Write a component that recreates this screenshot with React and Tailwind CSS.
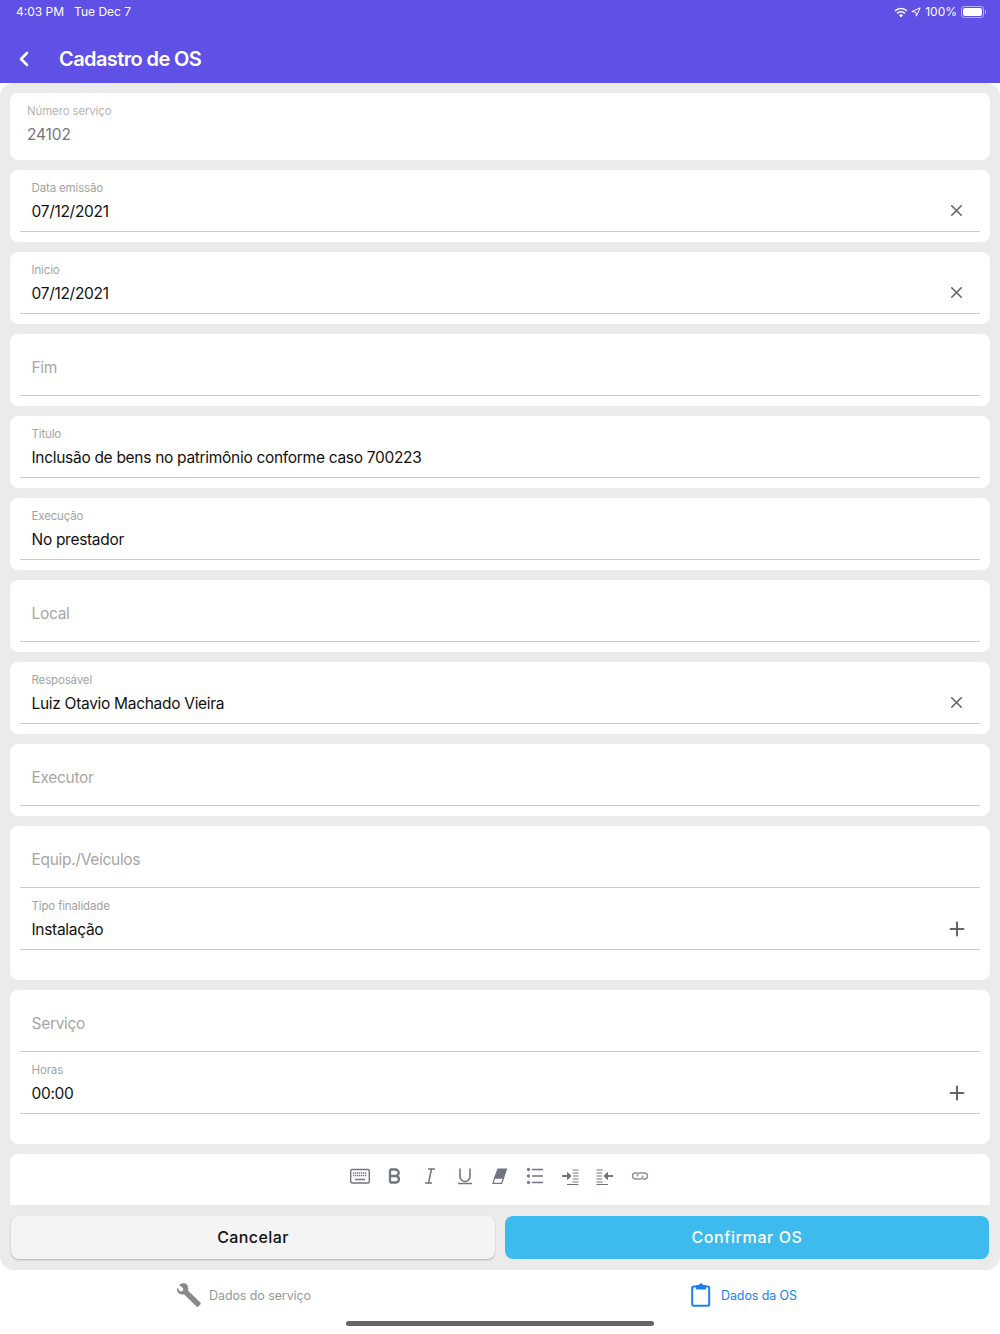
import { X, Plus } from "lucide-react"

function Wrench() {
  return (
    <svg width="24" height="24" viewBox="0 0 24 24" className="text-[#8a8a8a]">
      <path fill="currentColor" d="M8.600 .6c-2.400-.8-5-.1-6.400 1.300l4 3.300-.4 2.800-2.800.6L.1 4.500c-.6 2-.1 4.200 1.400 5.600 1.500 1.400 3.600 1.800 5.400 1.100l12.600 12.300c.5.500 1.300.5 1.800 0l2-2.100c.5-.5.5-1.300 0-1.800L11 7.400c.7-2.700-.2-5.700-2.400-6.800z" />
    </svg>
  )
}

function Clipboard() {
  return (
    <svg width="20" height="24" viewBox="0 0 20 24" fill="none" stroke="#1a80f0">
      <rect x="1.200" y="3.500" width="17" height="19.300" rx="1.500" strokeWidth="2" />
      <path d="M5.500 2.500h2.800a1.700 1.700 0 0 1 3.400 0h2.800v3.500H5.500z" fill="#1a80f0" strokeWidth="1" />
    </svg>
  )
}

function Toolbar() {
  return (
    <div className="flex h-[51px] items-start justify-center gap-[15px] rounded-t-lg bg-white pt-[12px] pr-[1px] text-[#6f7680]">
      <svg width="20" height="20" viewBox="0 0 20 20" fill="none" stroke="currentColor">
        <rect x=".7" y="3.500" width="18.600" height="13.500" rx="1.500" strokeWidth="1.400" />
        <path d="M3 7h14M3 9.500h14" strokeWidth="1.500" strokeDasharray="1.300 .7" />
        <path d="M5 13.500h10" strokeWidth="1.500" />
      </svg>
      <svg width="20" height="20" viewBox="0 0 20 20" fill="none" stroke="currentColor" strokeWidth="2.300">
        <path d="M5 3.500v13M5 3.500h5.500a3.200 3.200 0 0 1 0 6.500H5m5.500 0h.7a3.300 3.300 0 0 1 0 6.500H5" />
      </svg>
      <svg width="20" height="20" viewBox="0 0 20 20" fill="none" stroke="currentColor" strokeWidth="1.500">
        <path d="M8 3h7M5 17h7M11.500 3 8.500 17" />
      </svg>
      <svg width="20" height="20" viewBox="0 0 20 20" fill="none" stroke="currentColor" strokeWidth="1.600">
        <path d="M5 2.500v8a5 5 0 0 0 10 0v-8M3 17.500h14" />
      </svg>
      <svg width="20" height="20" viewBox="0 0 20 20" fill="none" stroke="currentColor" strokeWidth="1.200">
        <path d="M8 3h8.500l-3 9H4.500z" fill="currentColor" />
        <path d="M4.500 12h9l-1.800 5.300H3z" />
      </svg>
      <svg width="20" height="20" viewBox="0 0 20 20" fill="none" stroke="currentColor">
        <path d="M7 3.500h11M7 10h11M7 16.500h11" strokeWidth="1.400" />
        <circle cx="3.500" cy="3.500" r="1.200" fill="currentColor" />
        <circle cx="3.500" cy="10" r="1.200" fill="currentColor" />
        <circle cx="3.500" cy="16.500" r="1.200" fill="currentColor" />
      </svg>
      <svg width="20" height="20" viewBox="0 0 20 20" fill="none" stroke="currentColor">
        <path d="M2 10h6" strokeWidth="2" />
        <path d="M7.500 6.500 11 10l-3.500 3.500z" fill="currentColor" />
        <path d="M12.500 4h6M13 7h5.500M13 10h5.500M13 13h5.500M12.500 16h6M7 18.500h11.500" strokeWidth="1" />
      </svg>
      <svg width="20" height="20" viewBox="0 0 20 20" fill="none" stroke="currentColor">
        <path d="M18 10h-6" strokeWidth="2" />
        <path d="M12.500 6.500 9 10l3.500 3.500z" fill="currentColor" />
        <path d="M1.500 4h6M1.500 7H7M1.500 10H7M1.500 13H7M1.500 16h6M1.500 18.500H13" strokeWidth="1" />
      </svg>
      <svg width="20" height="20" viewBox="0 0 20 20" fill="none" stroke="#8b9199" strokeWidth="1.400">
        <path d="M7.500 7H5.500a3 3 0 0 0 0 6h5a2.500 2.500 0 0 0 2-3.500" />
        <path d="M12.500 13h2a3 3 0 0 0 0-6h-5a2.500 2.500 0 0 0-2 3.500" />
      </svg>
    </div>
  )
}

function Field({ label, value, icon }) {
  return (
    <div className="relative h-[62px] shrink-0 border-b border-[#cacaca]">
      {value ? (
        <>
          <div className="absolute top-[11px] left-[11.500px] text-[11.500px] leading-[15px] tracking-[-0.15px] text-[#a3a3a3]">{label}</div>
          <div className="absolute top-[32px] left-[11.500px] text-[15.500px] leading-[20px] tracking-[-0.3px] text-[#111]">{value}</div>
        </>
      ) : (
        <div className="absolute top-[24px] left-[11.500px] text-[15.500px] leading-[20px] tracking-[-0.3px] text-[#a6a6a6]">{label}</div>
      )}
      {icon === "x" && <X size={19} strokeWidth={2} className="absolute right-[14px] top-[31px] text-[#666]" />}
      {icon === "plus" && <Plus size={22} strokeWidth={2.200} className="absolute right-[12px] top-[30px] text-[#666]" />}
    </div>
  )
}

function Card({ label, value, icon }) {
  return (
    <div className="h-[72px] shrink-0 rounded-lg bg-white px-[10px]">
      <Field label={label} value={value} icon={icon} />
    </div>
  )
}

function DoubleCard({ first, label, value }) {
  return (
    <div className="h-[154px] shrink-0 rounded-lg bg-white px-[10px]">
      <Field label={first} />
      <Field label={label} value={value} icon="plus" />
    </div>
  )
}

export default function App() {
  return (
    <div className="flex h-[1334px] w-[1000px] flex-col overflow-hidden bg-white font-['Inter',sans-serif]">
      {/* HEADER */}
      <header className="h-[83px] shrink-0 bg-[#5f50e6] text-white">
        <div className="flex h-[24px] items-center justify-between pl-[16px] pr-[14px] text-[12px]">
          <div className="flex gap-[10px]">
            <span>4:03 PM</span>
            <span>Tue Dec 7</span>
          </div>
          <div className="flex items-center gap-[3px]">
            <svg width="14" height="11" viewBox="0 0 14 11" fill="none" stroke="white" strokeWidth="1.700" className="mr-[-1px]">
              <path d="M1 4a8.500 8.500 0 0 1 12 0M3.200 6.300a5.400 5.400 0 0 1 7.600 0" />
              <path d="M7 10.500 5 8.300a2.800 2.800 0 0 1 4 0z" fill="white" stroke="none" />
            </svg>
            <svg width="10" height="12" viewBox="0 0 12 12" fill="none" stroke="white" strokeWidth="1.200" className="ml-[1px]">
              <path d="M11 1 1 5.500l4.800.8.700 4.700z" />
            </svg>
            <span className="ml-[1px]">100%</span>
            <div className="ml-[1px] flex items-center">
              <div className="h-[12px] w-[23px] rounded-[3px] border border-[#b5aef3] p-[1px]">
                <div className="h-full w-full rounded-[2px] bg-white" />
              </div>
              <div className="ml-[1px] h-[4px] w-[1px] bg-[#b5aef3]" />
            </div>
          </div>
        </div>
        <div className="flex h-[59px] items-center pt-[11px]">
          <svg width="12" height="16" viewBox="0 0 12 16" fill="none" stroke="white" strokeWidth="2.600" strokeLinecap="round" strokeLinejoin="round" className="ml-[18px]">
            <path d="M9 2 3 8l6 6" />
          </svg>
          <h1 className="ml-[29px] text-[20px] font-semibold tracking-[-0.6px]">Cadastro de OS</h1>
        </div>
      </header>

      {/* FORM */}
      <main className="flex h-[1187px] shrink-0 flex-col gap-[10px] overflow-hidden rounded-[14px] bg-[#ebebeb] px-[10px] pt-[10px]">
        <div className="relative h-[67px] shrink-0 rounded-lg bg-white">
          <div className="absolute top-[11px] left-[17px] text-[11.500px] leading-[15px] tracking-[-0.15px] text-[#b5b5b5]">Número serviço</div>
          <div className="absolute top-[32px] left-[17px] text-[15.500px] leading-[20px] tracking-[-0.15px] text-[#777]">24102</div>
        </div>
        <Card label="Data emissão" value="07/12/2021" icon="x" />
        <Card label="Inicio" value="07/12/2021" icon="x" />
        <Card label="Fim" />
        <Card label="Titulo" value="Inclusão de bens no patrimônio conforme caso 700223" />
        <Card label="Execução" value="No prestador" />
        <Card label="Local" />
        <Card label="Resposável" value="Luiz Otavio Machado Vieira" icon="x" />
        <Card label="Executor" />
        <DoubleCard first="Equip./Veículos" label="Tipo finalidade" value="Instalação" />
        <DoubleCard first="Serviço" label="Horas" value="00:00" />
        <Toolbar />
        <div className="mt-[1px] flex h-[44px] shrink-0 gap-[10px] px-[1px]">
          <button className="h-[43px] flex-1 rounded-lg bg-[#f4f4f4] pb-[1px] text-[16px] font-medium tracking-[0.4px] text-[#111] shadow-[0_1px_2px_rgba(0,0,0,0.25)]">
            Cancelar
          </button>
          <button className="h-[43px] flex-1 rounded-lg bg-[#3dbbee] pb-[1px] text-[16px] font-medium tracking-[0.6px] text-white">
            Confirmar OS
          </button>
        </div>
      </main>

      {/* TAB BAR */}
      <footer className="relative flex flex-1 bg-white">
        <div className="flex w-1/2 items-start justify-center gap-[8px] pt-[13px] pr-[12px]">
          <Wrench />
          <span className="text-[12.500px] leading-[26px] tracking-[-0.1px] text-[#979797]">Dados do serviço</span>
        </div>
        <div className="flex w-1/2 items-start justify-center gap-[10px] pt-[13px] pr-[12px]">
          <Clipboard />
          <span className="text-[12.500px] leading-[26px] tracking-[-0.1px] text-[#1a80f0]">Dados da OS</span>
        </div>
        <div className="absolute bottom-[8px] left-[346px] h-[5px] w-[308px] rounded-full bg-[#666]" />
      </footer>
    </div>
  )
}
